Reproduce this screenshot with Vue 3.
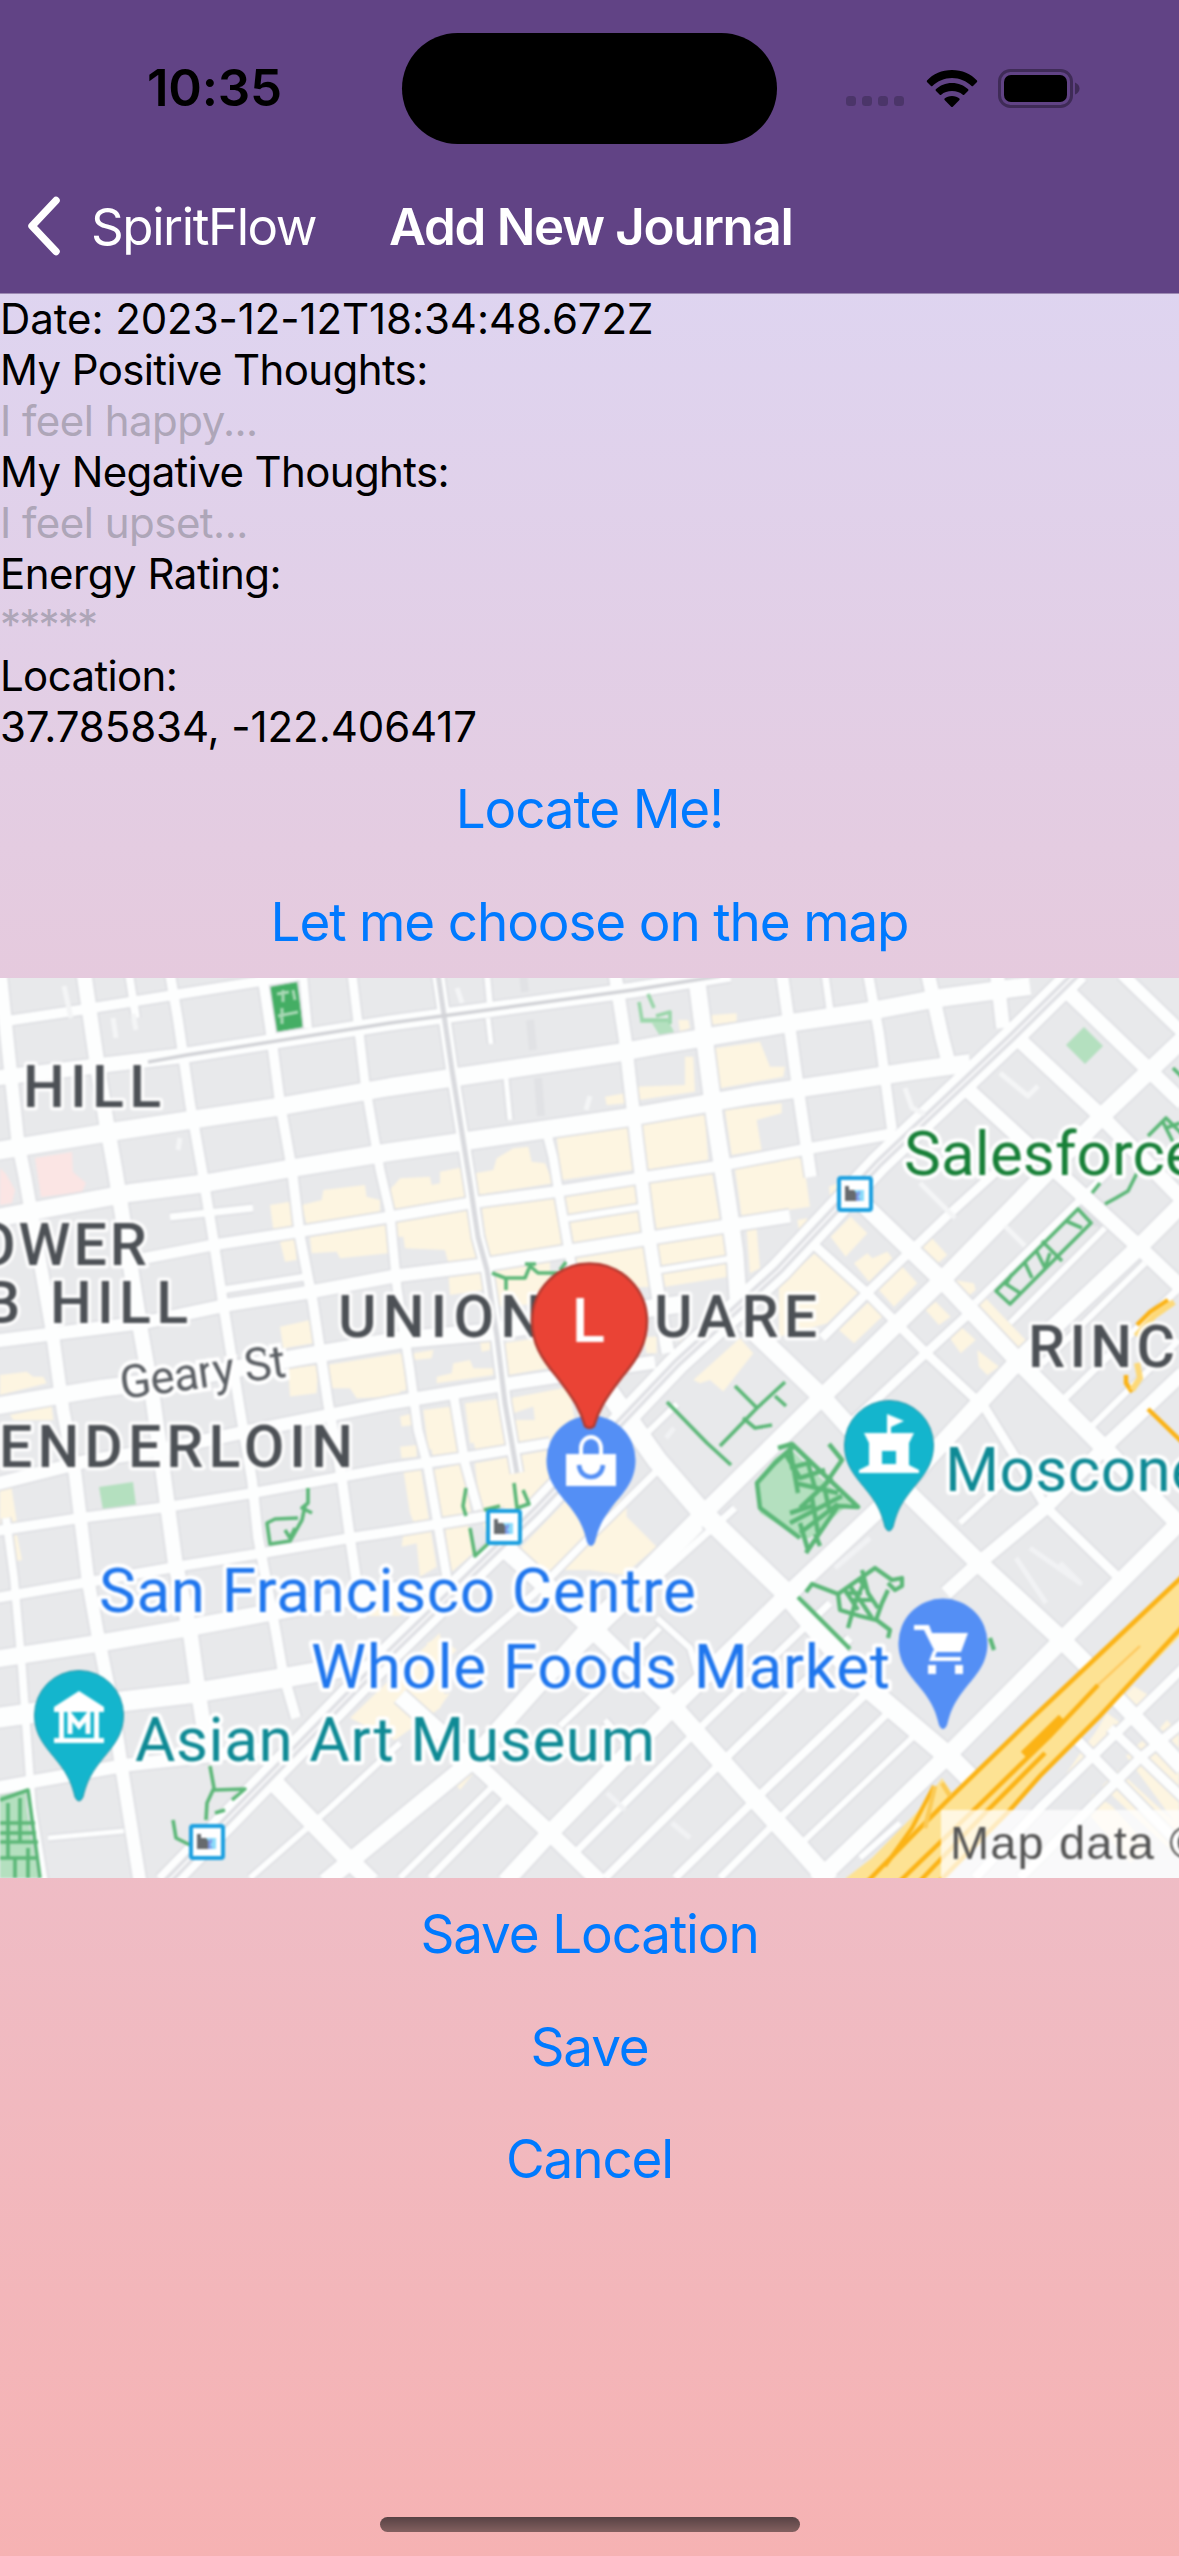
<script setup>
const rows = [
  { text: 'Date: 2023-12-12T18:34:48.672Z', cls: 'digits' },
  { text: 'My Positive Thoughts:', cls: 'label' },
  { text: 'I feel happy...', cls: 'hint' },
  { text: 'My Negative Thoughts:', cls: 'label' },
  { text: 'I feel upset...', cls: 'hint' },
  { text: 'Energy Rating:', cls: 'short' },
  { text: '*****', cls: 'hint stars' },
  { text: 'Location:', cls: 'label' },
  { text: '37.785834, -122.406417', cls: 'digits' },
]

// [width, points] in map pixels
const streets = [
  // east-west, north of Market
  [10, '0,44 80,32 180,16 300,-3'],
  [15, '-4,100 187,77 390,45 487,32 633,12 730,-4'],
  [18, '-4,173 117,153 277,129 390,109 617,75 660,67 796,44 876,32 939,20 1030,8'],
  [18, '-4,240 130,215 207,205 287,191 390,174 460,164 630,139 753,117 842,104 912,93 970,85'],
  [11, '120,285 213,267 297,254 383,240 470,225 553,214 640,200 713,189 812,170 896,155'],
  [13, '-4,363 147,344 227,327 310,314 395,298 483,287 607,267 688,254 790,238'],
  [7, '222,312 305,299'],
  [17, '-4,428 103,410 187,400 300,379 400,362 490,354 590,338 690,325'],
  [13, '-4,506 83,484 170,470 240,455 390,425 463,413 533,402 655,384'],
  [10, '-4,553 80,540 167,529 253,515 340,499 390,490 467,479 550,465'],
  [10, '-4,620 83,605 187,587 263,575 350,560 390,554 475,540 505,535'],
  [17, '-4,681 100,665 187,650 273,634 367,617 440,606'],
  [20, '-4,740 33,735 117,724 193,715 283,700 340,690'],
  [13, '-4,810 127,787 200,779 270,770'],
  [5, '48,860 124,853'],
  [7, '170,239 253,230'],
  // north-south, north of Market
  [13, '0,-8 18,165 25,199 52,352 63,432 75,495 88,602 98,658 113,732 122,792 140,904'],
  [15, '84,-4 97,85 106,142 115,192 121,229 141,355 153,422 163,494 175,583 191,660 200,725 208,776'],
  [10, '170,-4 178,42 190,125 202,192 213,259 223,325 240,432 252,502 258,559 276,655 283,695 296,740'],
  [10, '262,-4 270,49 280,125 292,192 300,259 313,325 328,425 342,502 350,560 362,640'],
  [8, '303,-4 308,50'],
  [8, '129,-4 136,40'],
  [9, '352,-4 358,45 365,105 380,192 390,235 397,310 410,392 418,452 427,485 437,542 448,606'],
  [8, '6,540 14,600 22,690 32,830 44,904'],
  [9, '453,413 465,485 478,532'],
  [12, '438,-4 452,92 470,205 478,259 487,292 497,359 505,425 517,495'],
  [6, '487,-4 490,28'],
  [5, '488,40 491,66'],
  [5, '506,100 510,142'],
  [9, '546,152 553,179 560,222 571,285 590,400'],
  [13, '615,-4 625,60 630,105 637,165 647,245 660,330 668,375'],
  [17, '696,-4 702,42 715,142 728,225 735,275 738,320'],
  [12, '782,-4 791,59 800,125 811,199'],
  [7, '825,-4 830,32'],
  [10, '868,-4 879,55 892,152'],
  [14, '928,-4 942,59 950,90'],
  [14, '997,-4 1003,50'],
  [6, '565,241 640,229'],
  [6, '655,293 728,281'],
  // parallel to Market
  [17, '325,904 467,787 587,652 700,539 822,419 942,302 1106,134 1183,61'],
  [17, '505,904 550,855 673,729 782,622 899,512 1019,382 1139,269 1183,225'],
  [17, '816,904 946,779 1062,662 1122,602 1183,541'],
  [14, '946,615 979,585 1046,529 1112,462 1183,395'],
  [9, '822,360 867,315 946,239 1000,190'],
  [9, '850,446 926,375 975,330'],
  [7, '975,325 1080,222 1120,182'],
  [6, '1010,345 1105,250'],
  [6, '1042,386 1145,285'],
  [7, '1065,420 1179,310'],
  [6, '1085,455 1179,362'],
  [7, '460,680 535,615 587,562 668,482'],
  [6, '640,462 677,426'],
  [7, '515,735 640,615 735,530'],
  [6, '560,748 600,710 660,650'],
  [6, '250,900 330,830 400,765'],
  [7, '430,900 505,823'],
  [6, '400,900 496,805'],
  [6, '555,848 690,715 780,630'],
  [7, '578,872 712,738 830,625'],
  [8, '605,900 740,766 850,660'],
  [8, '675,900 765,812 870,712'],
  [7, '720,900 785,835 888,735'],
  [6, '805,862 915,757'],
  [10, '535,715 700,548'],
  [6, '960,545 1003,505'],
  [6, '860,880 900,845'],
  // crossing Market's south side
  [15, '1064,10 1152,95 1183,125'],
  [12, '1122,-4 1183,55'],
  [15, '1012,55 1102,139 1183,222'],
  [15, '968,112 1139,269 1183,311'],
  [17, '862,225 942,302 1020,385 1100,466 1183,550'],
  [9, '812,265 867,315 926,375 985,430 1046,529 1125,606'],
  [18, '745,345 822,419 912,519 979,585 1062,662 1105,705'],
  [20, '606,410 657,482 700,532 783,612 862,705 949,779 975,805'],
  [19, '505,570 587,645 673,729 747,812 800,870 830,904'],
  [16, '400,718 477,787 550,855 600,904'],
  [18, '262,792 343,876 372,904'],
  [6, '657,640 690,670 700,705'],
  [6, '605,742 632,772'],
  // south of the freeway
  [16, '1088,690 1183,790'],
  [9, '1183,690 1040,830 975,900'],
  [9, '1183,745 1140,780 1080,840 1020,900'],
  [10, '1075,760 1183,870'],
  [9, '1110,750 1183,820'],
]

const market = 'M165 906L390 675L537 532L677 385L779 292L879 185L1012 59L1078 -6'

const stops = [
  { x: 837, y: 198 },
  { x: 486, y: 531 },
  { x: 189, y: 846 },
]
</script>

<template>
  <div class="screen">
    <header class="top">
      <div class="status">
        <span class="time">10:35</span>
        <span class="island"></span>
        <span class="indicators">
          <svg class="signal" width="60" height="12" viewBox="0 0 60 12">
            <rect v-for="i in 4" :key="i" :x="(i - 1) * 16" y="0" width="10" height="10" rx="3.5" fill="#4b3569" />
          </svg>
          <svg class="wifi" width="52" height="38" viewBox="0 0 52 38">
            <path d="M26 0C36 0 45 4 51 10.500Q51.500 11.300 51 12L47 16Q46.300 16.500 45.600 16C40.500 11 33.500 8 26 8S11.500 11 6.400 16Q5.700 16.500 5 16L1 12Q.5 11.300 1 10.500C7 4 16 0 26 0z" />
            <path d="M26 13C32.500 13 38 15.400 42.200 19.300Q42.700 20 42.200 20.700L38.200 24.700Q37.500 25.200 36.800 24.700C34 22.300 30.300 21 26 21S18 22.300 15.200 24.700Q14.500 25.200 13.800 24.700L9.800 20.700Q9.300 20 9.800 19.300C14 15.400 19.500 13 26 13z" />
            <path d="M26 26C29 26 31.600 27 33.400 28.500Q34 29.200 33.400 30L26.800 36.700Q26 37.300 25.200 36.700L18.600 30Q18 29.200 18.600 28.500C20.400 27 23 26 26 26z" />
          </svg>
          <svg class="battery" width="82" height="40" viewBox="0 0 82 40">
            <rect x="1.500" y="1.500" width="72" height="36" rx="11" fill="none" stroke="#3f2b57" stroke-width="3" />
            <rect x="6" y="6" width="63" height="27" rx="7" />
            <path d="M77 13.500q4.500 2 4.500 6t-4.500 6z" fill="#3f2b57" />
          </svg>
        </span>
      </div>
      <nav class="nav">
        <svg class="chevron" width="36" height="60" viewBox="0 0 36 60">
          <path d="M30 4.500L6 30L30 55.500" fill="none" stroke="#fff" stroke-width="7.500" stroke-linecap="round" stroke-linejoin="round" />
        </svg>
        <span class="back">SpiritFlow</span>
        <h1 class="title">Add New Journal</h1>
      </nav>
    </header>

    <main class="body">
      <p v-for="(r, i) in rows" :key="i" class="row" :class="r.cls">{{ r.text }}</p>
      <button class="btn">Locate Me!</button>
      <button class="btn">Let me choose on the map</button>

      <svg class="map" width="1179" height="900" viewBox="0 0 1179 900">
        <defs>
          <path id="pin" d="M-44.500 0A44.500 44.500 0 1 1 44.500 0C44.500 21 33 32 21 47C10 61 7 70 4 82Q0 90 -4 82C-7 70 -10 61 -21 47C-33 32 -44.500 21 -44.500 0z" />
        </defs>
        <rect width="1179" height="900" fill="#eff0f1" />
        <g class="soft">
          <rect x="-10" y="-10" width="1199" height="920" fill="#e8e9eb" />

          <g fill="#fdf5e1">
            <g transform="translate(0 -8) scale(.3333)">
              <path d="M810 705L870 695L885 765L820 780zM840 815L885 800L890 870L855 875zM905 705L965 690L970 660L1095 645L1100 680L1140 690L1140 730L920 765zM930 800L1160 765L1165 850L1020 865L1010 845L935 850zM1175 650L1210 640V720L1175 715zM840 1070L930 1050L940 1120L850 1135zM865 1195L955 1185L950 1270L870 1280zM980 1185L1200 1150V1280L1070 1285L1050 1255L990 1255zM0 1215L80 1205L100 1220L130 1220L140 1240L0 1275zM30 1335L155 1310L160 1350H40z" />
            </g>
            <g transform="translate(390 -8) scale(.3333)">
              <path d="M0 660L30 625L120 620L125 645L150 640L150 605L225 590L245 690L0 720zM15 750L240 720L265 870L175 880L165 840L45 835L40 800L20 800zM255 610L310 600L320 565L370 535L415 530L425 575L465 580L490 640L265 675zM275 710L500 680L515 830L295 865zM500 500L715 470L730 600L515 630zM525 680L740 645L760 790L550 820zM740 465L945 435L955 570L765 600zM775 630L965 600L990 750L800 780zM645 380L705 370L710 400L650 405zM740 350L885 345L885 260H910L915 365L745 390zM965 135L1040 130V155L960 165zM865 150H895L900 175L870 185zM975 235L1110 215L1140 290L1185 290L1180 320L990 355zM1005 420L1175 400V430L1100 450L1115 540L1025 555zM1035 595L1240 565L1260 710L1055 740zM550 850L770 825L785 950L560 960zM800 815L1000 785L1015 920L825 950zM1070 780L1100 775L1110 895L1080 910zM175 910L270 900L280 960L180 975zM300 890L480 870V1000L320 1010zM0 1155L40 1150L50 1260L0 1270zM70 1150L130 1140L125 1165L75 1170zM190 1180L240 1170L250 1195L310 1195V1215L140 1240V1220L185 1210zM270 1110L300 1100L300 1140L275 1145zM340 1120L440 1105L500 1190L355 1215zM360 1285L540 1250L560 1400H440L430 1310L370 1330zM225 1300L340 1285L355 1400L240 1420zM100 1320L185 1310L195 1420L115 1440zM30 1340L70 1330V1365L35 1370zM910 1230L1050 1105L1090 1150L1000 1265L960 1230L930 1240zM870 1110L920 1110L870 1150zM760 1100L800 1100V1150L770 1150z" />
            </g>
            <g transform="translate(779 -8) scale(.3333)">
              <path d="M0 570L60 560L80 710L0 720zM0 945L125 835L245 960L145 1060L0 1100zM155 800L215 740L265 790L200 860zM225 880L265 850L280 865L325 845L340 865L270 935zM300 960L370 890L415 940L345 1010zM180 1080L275 990L315 1035L225 1120zM410 820L445 790L505 855L465 890zM525 930L585 940L590 960L560 985zM595 1010L620 985L740 1110L715 1135zM440 1020L470 995L515 1040L480 1065zM510 1100L540 1065L590 1110L545 1150zM595 1140L660 1190L625 1215L600 1190zM55 750L85 745V775L60 780zM290 550L300 545L240 610L230 605zM150 650L175 640V690L155 695z" />
            </g>
            <path d="M0 502L10 500L17 545L0 548zM4 560L17 557L22 582L8 584zM368 638L400 638L440 600L400 605zM350 740L400 692L440 655L442 700L445 720L440 730L395 762z" />
            <g transform="translate(390 442) scale(.3333)">
              <path d="M40 150L90 135L140 440L90 470L80 370L35 380L40 340L80 330L60 280zM130 150L220 130L245 290L160 310zM165 320L235 310L250 400L180 460zM255 130L480 90L480 190L300 380L270 280zM110 0L190 -10L210 100L130 120zM230 0H460L490 60L260 100zM395 380L540 230L710 240L710 290L800 380L700 465L600 450L470 450L400 405zM30 80L80 75L80 110L35 115zM195 1090L225 1055L250 1060L210 1110zM0 820L60 770L40 900L0 870zM110 670L150 650L200 690L150 740zM120 830L180 820L150 860z" />
            </g>
            <path d="M1125 717L1134 708L1153 720L1142 732zM1060 805L1085 768L1095 755L1107 735L1125 748L1090 790L1065 808zM1126 778L1142 763L1179 795V850zM1102 808L1118 792L1179 848V880zM1084 830L1094 816L1112 828L1150 870L1130 885zM1160 750L1167 742L1179 755V770z" />
          </g>
          <path fill="#fbe5e4" d="M35 180L72 174L73 194L86 205L82 214L41 219zM0 190L6 196L15 212L12 225L0 227z" />
          <path fill="#e0e1e5" d="M1070 215L1082 205L1112 232L1108 250L1092 248z" />

          <!-- light park areas -->
          <g fill="#b4e0bf">
            <path d="M99 509L133 504L136 527L103 532zM1066 67L1084 49L1103 68L1085 86z" />
            <path d="M640 42H668L675 56L660 58L652 45H640z" />
            <path d="M0 815L28 810L42 900H0z" />
            <path d="M755 505L775 480L790 470L815 495L850 525L810 560L800 560L760 535z" />
          </g>
          <path fill="#44ae64" d="M270 9L297 4L303 49L276 54z" />
          <path fill="none" stroke="#a9d8b5" stroke-width="3" d="M277 16L289 14M283 12V24M278 38L298 34M282 30V46M293 12L295 22" />

          <!-- streets: casing then surface -->
          <g fill="none" stroke-linejoin="round">
            <polyline v-for="(s, i) in streets" :key="'c' + i" :points="s[1]" stroke="#dcdde1" :stroke-width="s[0] + 3" />
            <path :d="market" stroke="#dcdde1" stroke-width="27" />
            <polyline v-for="(s, i) in streets" :key="'s' + i" :points="s[1]" stroke="#fdfefe" :stroke-width="s[0]" />
            <path :d="market" stroke="#fdfefe" stroke-width="24" />
            <path :d="market" stroke="#dfe0e4" stroke-width="9" />
            <path :d="market" stroke="#fafafb" stroke-width="2" />
            <path d="M438 -4L452 92L470 205L478 259L487 292L497 359L505 425L517 495" stroke="#d9dade" stroke-width="5" />
            <path d="M148 84L187 77L390 45L487 32L633 12L720 -2" stroke="#d2d3d7" stroke-width="3.500" />
            <path d="M530 42L533 72M538 100L541 138M523 -4L525 14" stroke="#e1e2e5" stroke-width="8" />
            <path d="M64 8L71 40M113 40L116 60M133 36L136 52M180 160L178 172M457 10L462 25M590 118L586 132M1000 95L1028 118L1038 108M905 110L912 130L925 136M920 205L955 240M1005 248L1025 268" stroke="#f4f5f6" stroke-width="5" />
            <path d="M1016 580L1046 625M1030 570L1080 605L1060 585M835 590L870 560M666 460L674 450M607 815L625 832M672 845L690 860" stroke="#f1f2f4" stroke-width="5" />
          </g>

          <!-- park paths -->
          <g fill="none" stroke="#5bb777" stroke-width="3.600" stroke-linejoin="round">
            <path d="M492 295L505 300H525L530 288L538 295H560M506 300V312M525 286H536M560 292L566 284" />
            <path d="M667 424L707 465L731 487M735 408L757 430L720 468M757 430L785 404M743 440L755 450L772 447M775 418L786 428" />
            <path d="M1173 90L1183 100M1148 158L1166 140L1183 157M1162 142L1176 170M1166 150L1180 145M1170 175L1183 165" />
            <path d="M1137 195L1128 213L1116 220L1105 226M1100 205L1092 215" />
            <path d="M1078 231L1091 245L1010 326L996 313zM1042 263L1062 283M1066 243L1082 250M1036 272L1045 290L1050 275M1012 296L1006 306L1020 315M1025 285L1032 300" />
            <path d="M308 510V525L302 530L312 535M305 528L302 542L290 563L270 566L267 545L275 541L298 540M285 552L290 560L295 550" />
            <path d="M210 788L214 810L207 825L206 842M214 812L245 811L232 822M215 835L225 832M173 842L176 860L190 867" />
            <path d="M466 510L463 528L466 538M514 505L517 530L529 526L523 512M470 550L475 578L492 562M484 532L500 528" />
            <path d="M0 822L28 812L40 900M0 845H35M0 864H38M0 880H38M8 825V880M20 820V865M28 870V900M15 880V900M0 855H36" />
            <path d="M778 470L792 466L858 529L838 528L806 575M795 467L775 485L757 505L760 530L780 545L800 560M785 475L800 500L825 492M795 505L838 515M800 530L832 500M790 545L842 518M800 555L838 526M829 466L842 482L826 505M790 470L798 515M808 485L815 510M812 520L818 555M790 490L812 484M790 535L812 528M824 508L830 535M800 545L808 572M815 556L820 568" stroke-width="4.500" />
            <path d="M798 619L850 671M806 614L812 606L838 616L875 590L892 602L902 600V608L895 612L888 605M838 616L840 632L860 638L876 642L882 625L888 612M850 608L862 625L872 640M865 602L855 625L848 650M874 640L890 652L888 660M862 592L868 615L878 630M845 615H862M850 622H872M845 612L858 632M866 610L858 600M990 660L994 672" stroke-width="4.200" />
            <path d="M639 24L642 42H668M648 16L654 30M656 38L670 34V46" stroke="#9ad6aa" />
          </g>

          <!-- freeway -->
          <path fill="#fde293" d="M846 900L872 880L918 833L942 800L952 815L1032 738L1183 598V655L1012 828L940 903H846z" />
          <g fill="none" stroke="#fbb316" stroke-width="4.500">
            <path d="M868 903L915 855L952 818L1030 742L1100 676L1183 598" />
            <path d="M1183 648L1100 738L1040 798L1010 832L940 903" />
            <path d="M900 903L980 826L1050 758L1098 707M920 903L988 832L1045 775" />
            <path d="M1024 777L1062 740" stroke-width="9" />
            <path d="M885 888L912 850L934 808" stroke-width="4" />
            <path d="M942 805L950 818M935 808L925 850" stroke="#fbca55" />
            <path d="M1148 431L1183 465" />
            <path d="M1126 397V405L1132 414" />
            <path d="M1137 347L1150 334L1168 322" />
          </g>
          <path fill="none" stroke="#fdd978" stroke-width="6" d="M1136 358L1154 338L1174 324M1137 385L1140 400L1132 412" />
          <path fill="none" stroke="#fdc557" stroke-width="2" d="M1098 707L1140 668" />

          <!-- labels -->
          <g class="area">
            <text x="23" y="129" textLength="141">HILL</text>
            <text x="150" y="287" text-anchor="end">OWER</text>
            <text x="-17" y="345">B</text>
            <text x="50" y="345" textLength="141">HILL</text>
            <text x="338" y="359" textLength="207">UNION</text>
            <text x="654" y="359" textLength="166">UARE</text>
            <text x="-1" y="489" textLength="357">ENDERLOIN</text>
            <text x="1028" y="389" textLength="150">RINC</text>
          </g>
          <text class="street" transform="translate(122 421) rotate(-7.800)" textLength="167">Geary St</text>
          <g class="poi">
            <text x="904" y="197" fill="#188038" textLength="294">Salesforce</text>
            <text x="99" y="634" fill="#1f76ee" textLength="597">San Francisco Centre</text>
            <text x="311" y="710" fill="#1f76ee" textLength="579">Whole Foods Market</text>
            <text x="135" y="783" fill="#0f8a95" textLength="520">Asian Art Museum</text>
            <text x="945" y="513" fill="#0f8a95" textLength="259">Moscone</text>
          </g>

          <!-- transit stops -->
          <g v-for="(s, i) in stops" :key="'t' + i" :transform="`translate(${s.x} ${s.y})`">
            <rect x="2" y="2" width="32" height="32" rx="2" fill="#fff" stroke="#1a9fe0" stroke-width="4" />
            <path fill="#8bdcfb" d="M17 14h10v11h-10z" />
            <path fill="#666a6e" d="M8 10h4v4h5l3 4v7H8z" />
            <path fill="#7d96e6" d="M19 17l4-2v3l-2 3 3 3-5 1z" />
          </g>

          <!-- place pins -->
          <g transform="translate(79 737)">
            <use href="#pin" fill="#14b5cd" stroke="#2796a8" />
            <path fill="#fff" d="M0 -24L25 -8V-3H-25V-8zM-20 -3h5v28h-5zM15 -3h5v28h-5zM-25 23h50v5h-50z" />
            <path fill="none" stroke="#fff" stroke-width="5" d="M-9 19V0L0 11L9 0V19" />
          </g>
          <g transform="translate(889 467)">
            <use href="#pin" fill="#14b5cd" stroke="#2796a8" />
            <path fill="#fff" fill-rule="evenodd" d="M-2 -31L15 -24L2 -18V-12H25L20 -2V20L30 25V28H-30V25L-20 20V-2L-25 -12H-2zM-7 6V19H7V6z" />
          </g>
          <g transform="translate(591 482)">
            <use href="#pin" fill="#548ff5" />
            <path fill="#fff" d="M-25 -6H25V26H-25z" />
            <path fill="none" stroke="#fff" stroke-width="4" d="M-10 -5V-12A10 11 0 0 1 10 -12V-5" />
            <path fill="none" stroke="#548ff5" stroke-width="4.500" d="M-12 5C-11 21 11 21 12 5" />
          </g>
          <g transform="translate(943 665)">
            <use href="#pin" fill="#548ff5" />
            <path fill="#fff" d="M-29 -18H-14L-11 -10H25L18 9H-8L-19 -13H-29z" />
            <path fill="none" stroke="#fff" stroke-width="4" d="M-8 8L-11 16H18" />
            <path fill="#fff" d="M-15 22h8v9h-8zM12 22h8v9h-8z" />
          </g>

          <!-- selected location -->
          <path fill="#ea4335" stroke="#b13a30" stroke-width="2.500" d="M532 343A57.500 57.500 0 0 1 647 343C647 365 638 380 622 399C605 421 598 433 594 448Q589.500 452 585 448C581 433 574 421 557 399C541 380 532 365 532 343z" />
          <text class="marker" x="572" y="364">L</text>

          <path fill="#fff" fill-opacity=".72" d="M941 832H1189V910H941z" />
          <text class="credit" x="950" y="881" textLength="254">Map data ©</text>
        </g>
      </svg>

      <button class="btn">Save Location</button>
      <button class="btn">Save</button>
      <button class="btn">Cancel</button>
    </main>

    <footer class="bottom"><span class="home"></span></footer>
  </div>
</template>

<style>
body {
  margin: 0;
}
</style>

<style scoped>
.screen {
  width: 1179px;
  height: 2556px;
  display: flex;
  flex-direction: column;
  overflow: hidden;
  font-family: Inter, "Liberation Sans", sans-serif;
  background: linear-gradient(180deg, #ddd6f3 180px, #faaca8 2960px);
}
.top {
  box-sizing: border-box;
  flex: none;
  height: 294px;
  background: #614385;
  border-bottom: 1px solid #9c89b3;
}
.status {
  box-sizing: border-box;
  height: 177px;
  display: flex;
  align-items: center;
}
.time {
  box-sizing: border-box;
  width: 402px;
  padding: 0 0 2px 147px;
  font-size: 51px;
  font-weight: 600;
  letter-spacing: -0.2px;
}
.island {
  flex: none;
  width: 375px;
  height: 111px;
  border-radius: 56px;
  background: #000;
}
.indicators {
  display: flex;
  align-items: center;
  padding-left: 69px;
}
.signal {
  margin: 26px 20px 0 0;
}
.wifi {
  margin-right: 20px;
}
.nav {
  height: 98px;
  display: flex;
  align-items: center;
  padding-left: 26px;
  color: #fff;
  font-size: 51px;
}
.back {
  width: 298px;
  padding-left: 29px;
  letter-spacing: -1.4px;
  white-space: nowrap;
}
.title {
  margin: 0;
  font-size: 51px;
  font-weight: 600;
  letter-spacing: -1.3px;
  white-space: nowrap;
}
.body {
  display: flex;
  flex-direction: column;
}
.row {
  margin: 0;
  height: 51px;
  line-height: 50px;
  font-size: 42px;
  white-space: nowrap;
  color: #000;
}
.digits {
  letter-spacing: -0.08px;
}
.label {
  letter-spacing: -0.63px;
}
.short {
  letter-spacing: -0.48px;
}
.hint {
  letter-spacing: -0.52px;
  color: #aea6b8;
}
.stars {
  letter-spacing: -1.8px;
}
.btn {
  height: 112.6px;
  border: 0;
  padding: 0;
  background: none;
  color: #007aff;
  font: 400 53px/113px Inter, "Liberation Sans", sans-serif;
  letter-spacing: -1.15px;
}
.map {
  display: block;
  width: 1179px;
  height: 900px;
  overflow: hidden;
}
.soft {
  filter: blur(1px);
}
.area text {
  font: 500 59px Roboto, sans-serif;
  letter-spacing: 3px;
  fill: #4d5156;
  stroke: #fff;
  stroke-width: 7px;
  stroke-opacity: 0.85;
  stroke-linejoin: round;
  paint-order: stroke;
}
.street {
  font: 400 46px Roboto, sans-serif;
  fill: #5c6065;
  stroke: #fff;
  stroke-width: 8px;
  paint-order: stroke;
}
.poi text {
  font: 400 62px Roboto, sans-serif;
  stroke: #fff;
  stroke-width: 8px;
  stroke-linejoin: round;
  paint-order: stroke;
}
.marker {
  font: 500 61px Roboto, sans-serif;
  fill: #fff;
}
.credit {
  font: 400 47px "Liberation Sans", sans-serif;
  fill: #555;
}
.bottom {
  margin-top: auto;
  height: 39px;
  display: flex;
  justify-content: center;
}
.home {
  width: 420px;
  height: 15px;
  border-radius: 8px;
  background: linear-gradient(#574244, #83605f);
}
</style>
